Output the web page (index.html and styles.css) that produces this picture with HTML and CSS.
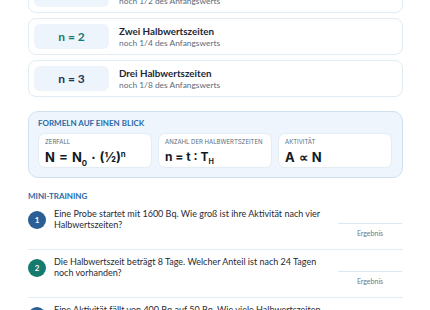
FILE: index.html
```html
<!DOCTYPE html>
<html lang="de">
<head>
  <meta charset="UTF-8">
  <meta name="viewport" content="width=device-width, initial-scale=1.0">
  <title>Halbwertszeit</title>
  <link rel="stylesheet" href="styles.css">
</head>
<body>
  <main class="page">
    <ul class="steps">
      <li class="step">
        <span class="step-badge">n = 1</span>
        <div class="step-text">
          <strong>Eine Halbwertszeit</strong>
          <span>noch 1/2 des Anfangswerts</span>
        </div>
      </li>
      <li class="step">
        <span class="step-badge teal">n = 2</span>
        <div class="step-text">
          <strong>Zwei Halbwertszeiten</strong>
          <span>noch 1/4 des Anfangswerts</span>
        </div>
      </li>
      <li class="step">
        <span class="step-badge">n = 3</span>
        <div class="step-text">
          <strong>Drei Halbwertszeiten</strong>
          <span>noch 1/8 des Anfangswerts</span>
        </div>
      </li>
    </ul>

    <section class="formulas">
      <h2 class="section-title">Formeln auf einen Blick</h2>
      <div class="formula-grid">
        <div class="formula-card">
          <span class="formula-label">Zerfall</span>
          <span class="formula big">N = N<sub>0</sub> · (½)<sup>n</sup></span>
        </div>
        <div class="formula-card">
          <span class="formula-label">Anzahl der Halbwertszeiten</span>
          <span class="formula">n = t : T<sub>H</sub></span>
        </div>
        <div class="formula-card">
          <span class="formula-label">Aktivität</span>
          <span class="formula big">A ∝ N</span>
        </div>
      </div>
    </section>

    <section class="training">
      <h2 class="section-title">Mini-Training</h2>
      <ol class="tasks">
        <li class="task">
          <span class="task-num">1</span>
          <p class="task-text">Eine Probe startet mit 1600 Bq. Wie groß ist ihre Aktivität nach vier Halbwertszeiten?</p>
          <div class="answer"><span class="answer-field"></span><span class="answer-label">Ergebnis</span></div>
        </li>
        <li class="task">
          <span class="task-num teal">2</span>
          <p class="task-text">Die Halbwertszeit beträgt 8 Tage. Welcher Anteil ist nach 24 Tagen noch vorhanden?</p>
          <div class="answer"><span class="answer-field"></span><span class="answer-label">Ergebnis</span></div>
        </li>
        <li class="task">
          <span class="task-num">3</span>
          <p class="task-text">Eine Aktivität fällt von 400 Bq auf 50 Bq. Wie viele Halbwertszeiten sind vergangen?</p>
          <div class="answer"><span class="answer-field"></span><span class="answer-label">Ergebnis</span></div>
        </li>
      </ol>
    </section>
  </main>
</body>
</html>
```

FILE: styles.css
```css
body {
  margin: 0;
  font-family: Lato, "Noto Sans", sans-serif;
  color: #1f2a37;
  background: #ffffff;
}

.page {
  margin-top: -24px;
  padding: 0 27px 0 28px;
}

.steps {
  list-style: none;
  margin: 0;
  padding: 0;
  display: flex;
  flex-direction: column;
  gap: 5px;
}

.step {
  display: flex;
  align-items: center;
  gap: 10px;
  padding: 5px;
  border: 1px solid #e3ecf2;
  border-radius: 8px;
}

.step-badge {
  width: 75px;
  height: 25px;
  display: flex;
  align-items: center;
  justify-content: center;
  background: #edf4fb;
  border-radius: 6px;
  font-size: 12px;
  font-weight: 700;
  color: #1e3553;
}

.step-badge.teal {
  color: #167a70;
}

.step-text {
  display: flex;
  flex-direction: column;
}

.step-text strong {
  font-size: 9.8px;
  line-height: 14px;
  font-weight: 700;
  color: #1d2735;
}

.step-text span {
  font-size: 8.4px;
  line-height: 11px;
  color: #5d6b7a;
}

.formulas {
  margin-top: 14px;
  padding: 6px 10px 9px 9px;
  background: #eef5fc;
  border: 1px solid #cfe1f0;
  border-radius: 10px;
}

.section-title {
  margin: 0;
  font-size: 8px;
  line-height: 10px;
  font-weight: 700;
  text-transform: uppercase;
  color: #2c6aa8;
}

.formula-grid {
  margin-top: 5px;
  display: grid;
  grid-template-columns: repeat(3, 1fr);
  gap: 6px;
}

.formula-card {
  display: flex;
  flex-direction: column;
  gap: 4px;
  padding: 4px 6px 3px;
  background: #ffffff;
  border: 1px solid #e3ecf2;
  border-radius: 7px;
  font-family: Inter, Roboto, sans-serif;
}

.formula-label {
  font-size: 6px;
  line-height: 8px;
  text-transform: uppercase;
  white-space: nowrap;
  color: #5d6b7a;
}

.formula {
  font-size: 12px;
  line-height: 14px;
  font-weight: 700;
  color: #111a26;
}

.formula.big {
  font-size: 13px;
  word-spacing: 1px;
}

.formula sub,
.formula sup {
  font-size: 60%;
  line-height: 0;
}

.training {
  margin-top: 13px;
}

.tasks {
  list-style: none;
  margin: 1px 0 0;
  padding: 0;
}

.task {
  display: grid;
  grid-template-columns: 18px 1fr 64px;
  column-gap: 8px;
  align-items: start;
  padding: 6px 1px 11px 0;
  border-bottom: 1px solid #e3ecf2;
}

.task-num {
  width: 18px;
  height: 18px;
  margin-top: 3px;
  border-radius: 50%;
  background: #2a5f95;
  color: #ffffff;
  font-size: 8px;
  font-weight: 700;
  display: flex;
  align-items: center;
  justify-content: center;
}

.task-num.teal {
  background: #177a6f;
}

.task-text {
  margin: 0;
  font-size: 9px;
  line-height: 11px;
}

.answer {
  display: flex;
  flex-direction: column;
  align-items: center;
}

.answer-field {
  align-self: stretch;
  height: 15px;
  border-bottom: 1px solid #dbe7f1;
}

.answer-label {
  margin-top: 4px;
  font-size: 7px;
  line-height: 10px;
  color: #6b7886;
}
```
